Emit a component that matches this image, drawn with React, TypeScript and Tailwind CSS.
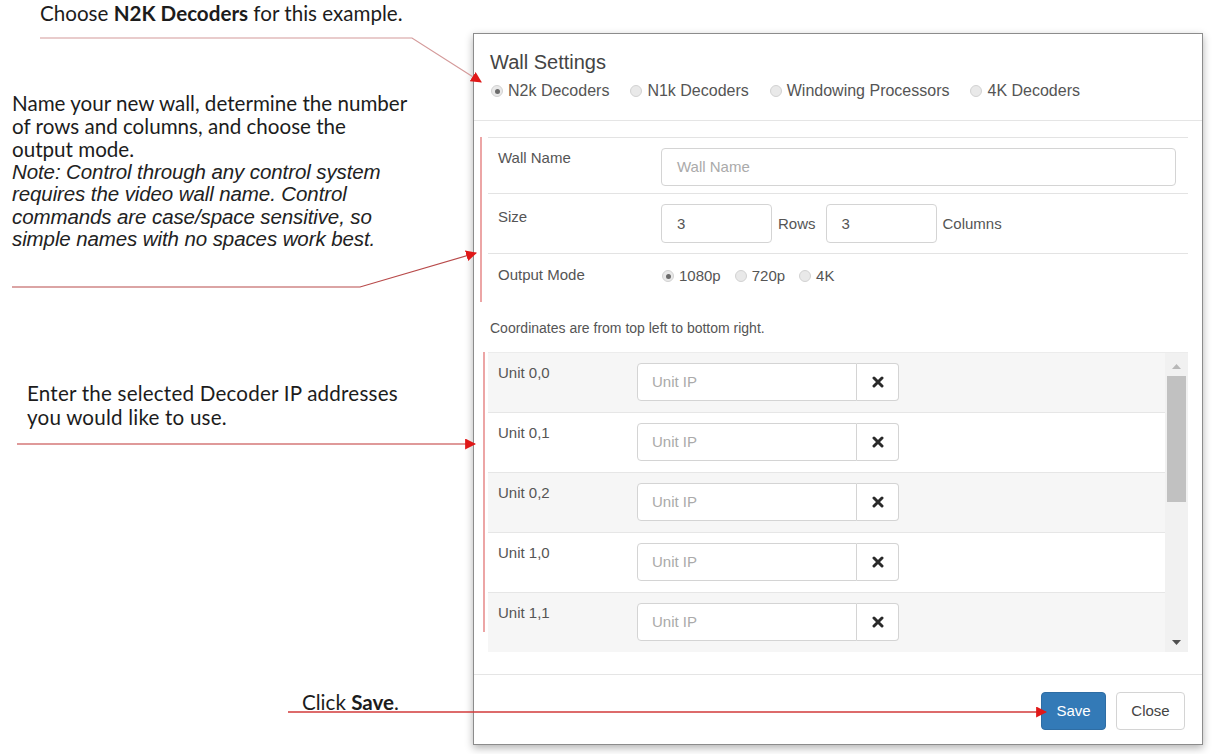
type RadioProps = { label: string; checked?: boolean };

function Radio({ label, checked }: RadioProps) {
  return (
    <label className="flex items-center gap-[5px]">
      <span className="w-[12px] h-[12px] rounded-full bg-[#e9e9e9] border border-[#d2d2d2] flex items-center justify-center">
        {checked && <span className="w-[5px] h-[5px] rounded-full bg-[#6b6b6b]" />}
      </span>
      <span>{label}</span>
    </label>
  );
}

// heavy "remove" cross used on the unit rows
function RemoveIcon() {
  return (
    <svg width="12" height="12" viewBox="0 0 12 12">
      <path d="M2,2 L10,10 M10,2 L2,10" stroke="#2a2a2a" strokeWidth={3} strokeLinecap="round" />
    </svg>
  );
}

const units = ['Unit 0,0', 'Unit 0,1', 'Unit 0,2', 'Unit 1,0', 'Unit 1,1'];

function Callouts() {
  return (
    <svg className="absolute inset-0 pointer-events-none" width={1212} height={754}>
      <defs>
        <marker id="tip" viewBox="0 0 10 10" refX="9" refY="5" markerWidth="11" markerHeight="11" markerUnits="userSpaceOnUse" orient="auto">
          <path d="M0,0 L10,5 L0,10 z" fill="#e01818" />
        </marker>
      </defs>
      <g fill="none" strokeWidth={1.2}>
        <polyline points="40,38 412,38 481,82" stroke="#d49a9a" markerEnd="url(#tip)" />
        <polyline points="12,287 360,287 476,253" stroke="#b84a4a" markerEnd="url(#tip)" />
        <line x1={17} y1={444} x2={475} y2={444} stroke="#c03434" markerEnd="url(#tip)" />
        <line x1={288} y1={712} x2={1046} y2={712} stroke="#d23a3a" strokeWidth={1.6} markerEnd="url(#tip)" />
        <line x1={481} y1={137} x2={481} y2={302} stroke="#e06a6a" />
        <line x1={484} y1={352} x2={484} y2={632} stroke="#e06a6a" />
      </g>
    </svg>
  );
}

export default function App() {
  return (
    <div className="relative w-[1212px] h-[754px] bg-white overflow-hidden flex">
      {/* notes column */}
      <div className="w-[473px] shrink-0 text-[#1c1c1c] font-['Lato',sans-serif] text-[20.6px] whitespace-nowrap">
        <p className="pl-[40px] pt-[2px] h-[24px] leading-[22px]">
          Choose <b>N2K Decoders</b> for this example.
        </p>
        <div className="pl-[12px] mt-[68px] h-[159px]">
          <p className="leading-[23px]">
            Name your new wall, determine the number
            <br />
            of rows and columns, and choose the
            <br />
            output mode.
          </p>
          <p className="leading-[22.3px] italic font-['Liberation_Sans',sans-serif] text-[20.5px] tracking-[-0.1px] text-[#222]">
            Note: Control through any control system
            <br />
            requires the video wall name. Control
            <br />
            commands are case/space sensitive, so
            <br />
            simple names with no spaces work best.
          </p>
        </div>
        <p className="pl-[27px] mt-[130px] h-[48px] leading-[24px] tracking-[0.2px]">
          Enter the selected Decoder IP addresses
          <br />
          you would like to use.
        </p>
        <p className="pl-[302px] mt-[261px] leading-[24px]">
          Click <b>Save</b>.
        </p>
      </div>

      {/* wall settings dialog */}
      <div className="mt-[33px] w-[730px] self-start bg-white border border-[#8c8c8c] shadow-[0_3px_8px_rgba(0,0,0,0.3)] font-['Liberation_Sans',Arial,sans-serif] text-[#555]">
        <div className="px-[16px] pt-[16px] pb-[19px] border-b border-[#e5e5e5]">
          <h4 className="text-[20px] leading-[24px] text-[#444]">Wall Settings</h4>
          <div className="mt-[7px] flex items-center gap-[21px] text-[16px] leading-[20px] pl-[1px]">
            <Radio label="N2k Decoders" checked />
            <Radio label="N1k Decoders" />
            <Radio label="Windowing Processors" />
            <Radio label="4K Decoders" />
          </div>
        </div>

        <div className="px-[14px] pt-[16px] pb-[22px]">
          <div className="text-[15px] leading-[20px]">
            <div className="h-[56px] flex border-t border-[#e3e3e3]">
              <div className="w-[173px] pl-[10px] pt-[10px]">Wall Name</div>
              <div className="pt-[10px]">
                <div className="w-[515px] h-[38px] border border-[#d4d4d4] rounded-[4px] px-[15px] flex items-center text-[#aaa]">Wall Name</div>
              </div>
            </div>
            <div className="h-[60px] flex border-t border-[#e3e3e3]">
              <div className="w-[173px] pl-[10px] pt-[13px]">Size</div>
              <div className="pt-[10px] flex items-center h-[49px] gap-[6px]">
                <div className="w-[111px] h-[39px] border border-[#d4d4d4] rounded-[4px] px-[15px] flex items-center">3</div>
                <span className="mr-[4px]">Rows</span>
                <div className="w-[111px] h-[39px] border border-[#d4d4d4] rounded-[4px] px-[15px] flex items-center">3</div>
                <span>Columns</span>
              </div>
            </div>
            <div className="h-[49px] flex border-t border-[#e3e3e3]">
              <div className="w-[173px] pl-[10px] pt-[11px]">Output Mode</div>
              <div className="pt-[12px] flex items-start gap-[14px] pl-[1px]">
                <Radio label="1080p" checked />
                <Radio label="720p" />
                <Radio label="4K" />
              </div>
            </div>
          </div>

          <p className="mt-[17px] text-[14px] leading-[18px] pl-[2px]">Coordinates are from top left to bottom right.</p>

          <div className="mt-[15px] h-[300px] flex border-t border-[#ececec] text-[15px] leading-[20px]">
            <div className="flex-1 overflow-hidden">
              {units.map((u, i) => (
                <div key={u} className={`h-[60px] flex border-b border-[#e6e6e6] ${i % 2 === 0 ? 'bg-[#f6f6f6]' : 'bg-white'}`}>
                  <div className="w-[149px] pl-[10px] pt-[10px]">{u}</div>
                  <div className="pt-[10px] flex">
                    <div className="w-[220px] h-[38px] bg-white border border-[#d4d4d4] rounded-l-[4px] px-[14px] flex items-center text-[#aaa]">Unit IP</div>
                    <div className="w-[42px] h-[38px] bg-white border border-l-0 border-[#d4d4d4] rounded-r-[4px] flex items-center justify-center">
                      <RemoveIcon />
                    </div>
                  </div>
                </div>
              ))}
            </div>
            {/* scrollbar */}
            <div className="w-[23px] bg-[#f1f1f1] flex flex-col items-center">
              <svg width="9" height="6" className="mt-[10px]" viewBox="0 0 9 6">
                <path d="M0,6 L4.5,1 L9,6 z" fill="#b8b8b8" />
              </svg>
              <div className="mt-[7px] w-[19px] h-[126px] bg-[#c1c1c1]" />
              <div className="flex-1" />
              <svg width="9" height="6" className="mb-[6px]" viewBox="0 0 9 6">
                <path d="M0,0 L4.5,5 L9,0 z" fill="#505050" />
              </svg>
            </div>
          </div>
        </div>

        <div className="border-t border-[#e5e5e5] flex justify-end gap-[10px] px-[17px] pt-[17px] pb-[14px] text-[15px]">
          <button className="w-[65px] h-[38px] rounded-[4px] bg-[#337ab7] border border-[#2e6da4] text-white">Save</button>
          <button className="w-[69px] h-[38px] rounded-[4px] bg-white border border-[#d4d4d4] text-[#444]">Close</button>
        </div>
      </div>

      <Callouts />
    </div>
  );
}
